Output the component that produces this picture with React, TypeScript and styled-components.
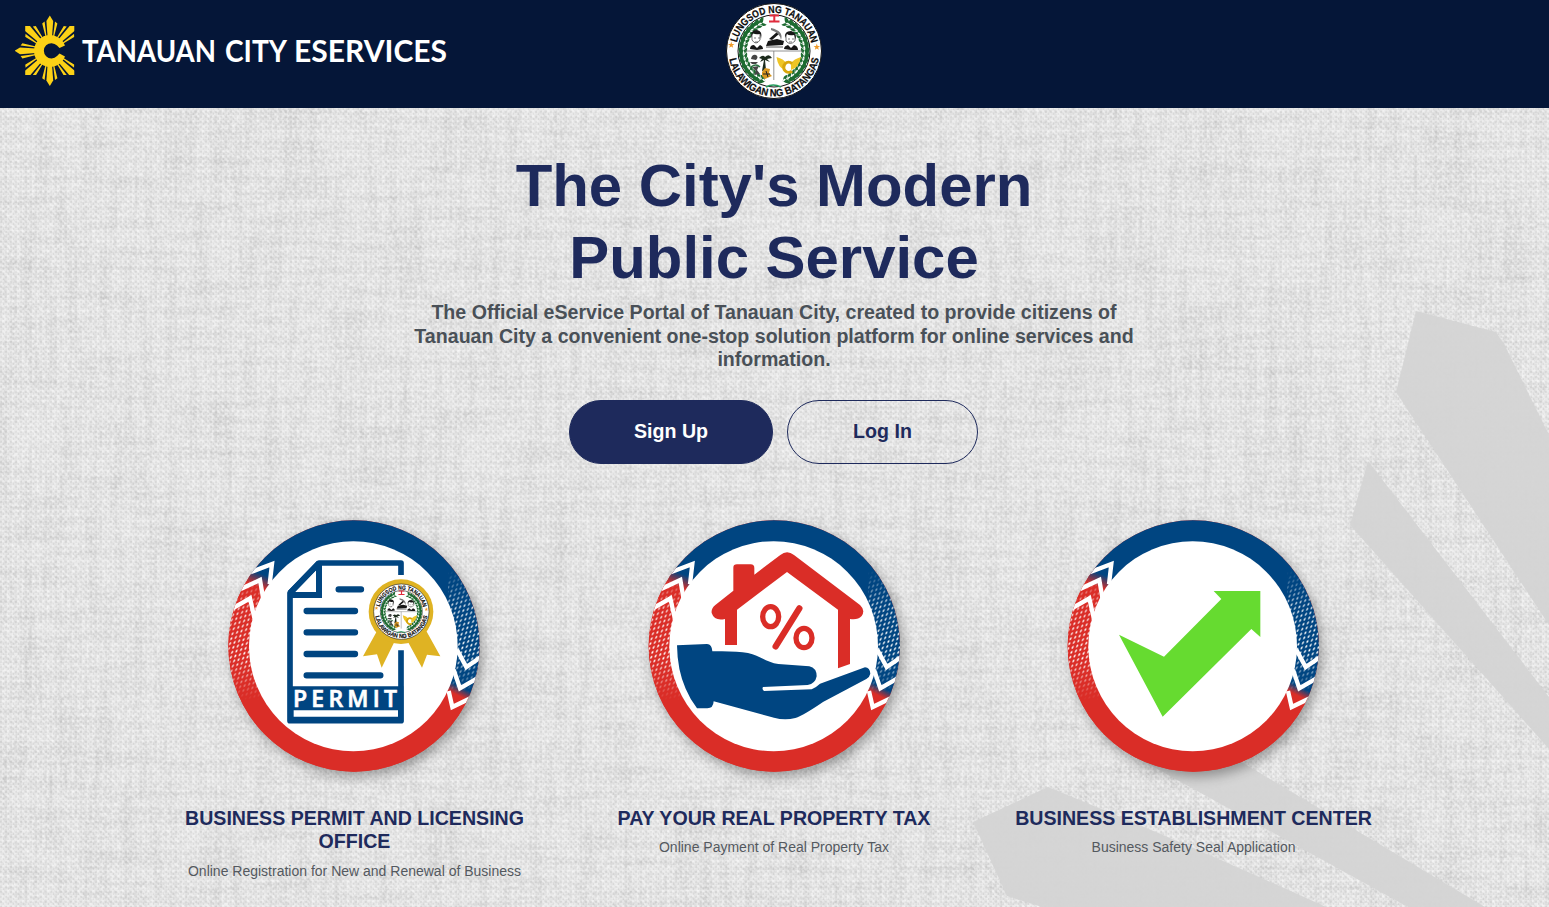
import React, { useId } from "react";
import styled, { createGlobalStyle } from "styled-components";

const NAVY = "#1e2a5c";
const BLUE = "#004581";
const RED = "#da2d27";

const GlobalStyle = createGlobalStyle`
  *, *::before, *::after { box-sizing: border-box; }
  html, body { margin: 0; padding: 0; overflow: hidden; }
  body { font-family: "Liberation Sans", Arial, sans-serif; background: #e3e3e3; }
  h1, h2, h3, p { margin: 0; }
`;

const Page = styled.div`
  display: flex;
  flex-direction: column;
  height: 907px;
  overflow: hidden;
`;

const Header = styled.header`
  display: grid;
  grid-template-columns: 1fr auto 1fr;
  flex: none;
  height: 108px;
  padding: 3px 16px 0 15px;
  background: #051638;
`;

const Brand = styled.a`
  display: flex;
  align-items: center;
  gap: 7px;
  height: 96px;
  color: #fff;
`;

const Wordmark = styled.svg`
  display: block;
  width: 380px;
  height: 50px;
  overflow: visible;
`;

const Main = styled.main`
  position: relative;
  flex: 1;
  display: flex;
  flex-direction: column;
  align-items: center;
  padding: 42px 1px 0 0;
`;

const Backdrop = styled.svg`
  position: absolute;
  inset: 0;
  width: 100%;
  height: 100%;
`;

const Hero = styled.section`
  position: relative;
  display: flex;
  flex-direction: column;
  align-items: center;
  width: 740px;
  text-align: center;
`;

const HeroTitle = styled.h1`
  width: 560px;
  font-size: 59.9px;
  line-height: 72px;
  font-weight: 700;
  color: ${NAVY};
`;

const HeroText = styled.h2`
  margin-top: 7px;
  font-size: 19.6px;
  line-height: 23.52px;
  font-weight: 700;
  color: #495057;
`;

const Actions = styled.div`
  display: flex;
  gap: 14px;
  margin-top: 28px;
  padding-right: 1px;
`;

const Button = styled.button<{ $filled?: boolean }>`
  width: ${(p) => (p.$filled ? 204 : 191)}px;
  height: 64px;
  padding: 0;
  border: 1px solid ${NAVY};
  border-radius: 32px;
  background: ${(p) => (p.$filled ? NAVY : "transparent")};
  color: ${(p) => (p.$filled ? "#fff" : NAVY)};
  font: 700 19.6px "Liberation Sans", Arial, sans-serif;
`;

const Services = styled.section`
  position: relative;
  display: grid;
  grid-template-columns: repeat(3, 419.5px);
  margin-top: 46px;
`;

const Card = styled.article`
  display: flex;
  flex-direction: column;
  align-items: center;
  padding: 0 28px;
  text-align: center;
`;

const BadgeArt = styled.svg`
  display: block;
  width: 270px;
  height: 270px;
  overflow: visible;
`;

const CardTitle = styled.h3`
  margin-top: 27px;
  font-size: 19.6px;
  line-height: 23.52px;
  font-weight: 700;
  color: ${NAVY};
`;

const CardText = styled.p`
  margin-top: 7px;
  font-size: 14px;
  line-height: 21px;
  color: #54595f;
`;

function Sun() {
  const rays = [0, 45, 135, 180, 225, 270, 315];
  return (
    <svg width="60" height="72" viewBox="15 15 60 72">
      <defs>
        <clipPath id="sun-frame">
          <path d="M25.2 26H42V15H58V26H74.3V75H58V87H42V75H25.2V60H15V42H25.2Z" />
        </clipPath>
      </defs>
      <g fill="#fcd116" clipPath="url(#sun-frame)">
        {rays.map((a) => (
          <g key={a} transform={`rotate(${a} 49.8 50.8)`}>
            <path
              d={
                a % 90
                  ? "M47.8 36 46.2 18 48 12H51.6L53.4 18 51.8 36Z"
                  : "M47.6 37 46.4 21 49.8 15.6 53.2 21 52 37Z"
              }
            />
            <path d="M45.6 37 42.2 23.4 44.6 21.6 46.6 37ZM54 37 57.4 23.4 55 21.6 53 37Z" />
          </g>
        ))}
      </g>
      <path
        d="M65 45.5A16 16 0 1 0 65 56.5L59.5 53.5 57 56A7.6 7.6 0 1 1 57 45.6L59.5 48Z"
        fill="#fcd116"
      />
    </svg>
  );
}

const words = [
  { text: "TANAUAN", x: 0, width: 134 },
  { text: "CITY", x: 143, width: 62 },
  { text: "ESERVICES", x: 212, width: 153 },
];

function Seal({ x, y, size }: { x?: number; y?: number; size: number }) {
  const id = useId().replace(/[^a-zA-Z0-9]/g, "");
  const leaves = Array.from({ length: 15 }, (_, i) => 24 + i * 9.6);
  return (
    <svg x={x} y={y} width={size} height={size} viewBox="0 0 96 96" overflow="visible">
      <defs>
        <path id={`${id}t`} d="M10 48A38 38 0 0 1 86 48" />
        <path id={`${id}b`} d="M2.6 48A45.4 45.4 0 0 0 93.4 48" />
      </defs>
      <circle cx="48" cy="48" r="47.5" fill="#fff" stroke="#111" strokeWidth="1" />
      <circle cx="48" cy="48" r="36" fill="#fff" stroke="#111" strokeWidth="1" />
      <g
        fontFamily="Liberation Sans, Arial, sans-serif"
        fontWeight="700"
        fontSize="10.2"
        fill="#0c0c0c"
        stroke="#0c0c0c"
        strokeWidth=".25"
      >
        <text>
          <textPath href={`#${id}t`} startOffset="8.5" textLength="103" lengthAdjust="spacingAndGlyphs">
            LUNGSOD NG TANAUAN
          </textPath>
        </text>
        <text>
          <textPath href={`#${id}b`} startOffset="8" textLength="127" lengthAdjust="spacingAndGlyphs">
            LALAWIGAN NG BATANGAS
          </textPath>
        </text>
      </g>
      <path d="M5.2 38.6 6 41 8.4 41 6.5 42.4 7.2 44.8 5.2 43.4 3.2 44.8 4 42.4 2 41H4.5ZM90.8 40.6 91.6 43 94 43 92.1 44.4 92.8 46.8 90.8 45.4 88.8 46.8 89.5 44.4 87.6 43H90Z" fill="#f09a28" />
      <path
        d="M33 18.5A33 33 0 0 0 33 77.5M63 18.5A33 33 0 0 1 63 77.5"
        fill="none"
        stroke="#1d6b31"
        strokeWidth="3.4"
      />
      <g fill="#1d6b31">
        {leaves.map((a) => (
          <g key={a}>
            <path transform={`rotate(${-a} 48 48)`} d="M45 17Q48 11.5 52 12.6 51 17 47 18.6ZM45 16Q47 22.4 52 21 49 16.5 45 16Z" />
            <path transform={`translate(96 0) scale(-1 1) rotate(${-a} 48 48)`} d="M45 17Q48 11.5 52 12.6 51 17 47 18.6ZM45 16Q47 22.4 52 21 49 16.5 45 16Z" />
          </g>
        ))}
      </g>
      <path d="M40 84Q47 80 55 84" fill="none" stroke="#249b5c" strokeWidth="1.6" />
      <path d="M43.5 12.6H53M48.3 12V18M43 18.6H53.5" stroke="#e02b3c" strokeWidth="2" />
      <path d="M19.5 48H76.5M47.8 48V77" stroke="#777" strokeWidth=".8" />
      <g fill="#171717">
        <path d="M25 35Q24 27 31 27 37 28 35 36L34 31Q29 32 27 30ZM24 46Q24 42 28 42L31 45 34 42Q37 43 37 46L31 47Z" />
        <path d="M59 35Q58 28 65 28 71 29 70 37L68 32Q63 33 61 31ZM58 46Q58 43 62 42L65 45 68 42Q72 43 72 47L65 47Z" />
        <path d="M40 43 42 38 51 36 58 38 57 42ZM43 36 51 29 53 31 46 37Z" />
        <path d="M45 25Q58 28 55 37 54 30 45 27Z" fill="#777" />
      </g>
      <path d="M26 31V37Q30 43 34 37V31M60 32V38Q64 43 69 38V32M28 35H30M32 35H34M62 36H64M66 36H68M29 39H32M63 39H66" fill="none" stroke="#555" strokeWidth=".8" />
      <path d="M40 44H57" stroke="#999" strokeWidth="1.6" />
      <path d="M25 56Q26 51 30 52 33 54 30 57ZM24 59H32L30 61H26ZM26 64 33 63 31 67 34 71 28 72 30 68Z" fill="#444" />
      <path d="M33 55Q37 51 39 54 43 50 46 55L41 56 44 59 39 57 40 67 36 68 38 57 34 59 36 56Z" fill="#1b2a1c" />
      <path d="M25 64Q30 60 34 64" fill="none" stroke="#2b7040" strokeWidth="1.4" />
      <path d="M36 69 39 65 44 66 43 70 46 73 39 76 36 73Z" fill="#d99722" />
      <path d="M37 71H44M40 68 42 74" stroke="#222" strokeWidth="1" />
      <path d="M50.5 54Q58 56 60 60L59 67Q52 65 50.5 54ZM75 54Q68 56 65 60L65 67Q73 65 75 54Z" fill="#efc526" />
      <path d="M66 60.5A5 5 0 1 0 66 68" fill="none" stroke="#d8a60c" strokeWidth="3" />
    </svg>
  );
}

function Badge({ children, shift = 0 }: { children: React.ReactNode; shift?: number }) {
  const id = useId().replace(/[^a-zA-Z0-9]/g, "");
  return (
    <BadgeArt viewBox="0 0 810 810">
      <defs>
        <clipPath id={`${id}c`}>
          <circle cx="403" cy="407" r="377" />
        </clipPath>
        <linearGradient id={`${id}l`} gradientUnits="userSpaceOnUse" x1="120" y1="188" x2="105" y2="225">
          <stop offset="0" stopColor={BLUE} />
          <stop offset="1" stopColor={RED} />
        </linearGradient>
        <linearGradient id={`${id}r`} gradientUnits="userSpaceOnUse" x1="728" y1="532" x2="716" y2="556">
          <stop offset="0" stopColor={BLUE} />
          <stop offset="1" stopColor={RED} />
        </linearGradient>
        <linearGradient id={`${id}f`} x1="0" y1="0" x2="0" y2="1">
          <stop offset="0" stopColor="#fff" stopOpacity="0" />
          <stop offset=".28" stopColor="#fff" stopOpacity=".8" />
          <stop offset=".65" stopColor="#fff" />
          <stop offset="1" stopColor="#fff" stopOpacity="0" />
        </linearGradient>
        <mask id={`${id}m`}>
          <rect x="20" y="200" width="100" height="370" fill={`url(#${id}f)`} />
          <rect x="685" y="180" width="100" height="370" fill={`url(#${id}f)`} />
        </mask>
        <pattern id={`${id}p`} width="12.5" height="15" patternUnits="userSpaceOnUse" patternTransform="skewX(-14) skewY(-18)">
          <ellipse cx="6" cy="7.5" rx="2.7" ry="4.6" fill="#fff" />
        </pattern>
      </defs>
      <g transform={`translate(${shift} 1)`}>
        <circle cx="403" cy="407" r="377" fill={RED} style={{ filter: "drop-shadow(10px 16px 18px rgba(0,0,0,.32))" }} />
        <g clipPath={`url(#${id}c)`}>
          <rect x="20" y="20" width="380" height="780" fill={`url(#${id}l)`} />
          <rect x="399" y="20" width="390" height="780" fill={`url(#${id}r)`} />
          <rect x="20" y="20" width="770" height="780" fill={`url(#${id}p)`} mask={`url(#${id}m)`} />
          <ellipse cx="401" cy="407.5" rx="313" ry="315" fill="#fff" />
          <g fill="none" stroke="#fff" strokeWidth="13">
            <path d="M92 186 157 161 150 222M55 240 121 209 130 262M28 300 91 264 104 322" />
            <path d="M712 418 740 470 790 436M702 478 721 534 780 500M687 542 698 590 760 560" />
          </g>
        </g>
        {children}
      </g>
    </BadgeArt>
  );
}

function PermitArt() {
  return (
    <>
      <path d="M544 194V158H298L211 248V631H544V420" fill="none" stroke={BLUE} strokeWidth="17" strokeLinejoin="round" />
      <path d="M298 158V254H211M211 248 298 158" fill="none" stroke={BLUE} strokeWidth="18" />
      <path d="M357 237H424M261 302H406M261 366H406M261 431H406M261 495H482" stroke={BLUE} strokeWidth="19" strokeLinecap="round" />
      <path d="M205 528H551V636H205Z" fill={BLUE} />
      <path d="M222 600H535V619H222Z" fill="#fff" />
      <text x="220" y="590" textLength="312" lengthAdjust="spacing" fontFamily="Open Sans, Noto Sans, sans-serif" fontWeight="600" fontSize="69" fill="#fff" stroke="#fff" strokeWidth="2">
        PERMIT
      </text>
      <path d="M472 362 430 438 472 432 486 472 524 395H565L607 472 622 433 662 438 620 362Z" fill="#dfb323" />
      <circle cx="544" cy="304" r="97" fill="#dfb323" />
      <Seal x={461} y={220} size={168} />
    </>
  );
}

function PropertyArt() {
  return (
    <>
      <path d="M255 404V326Q223 333 215 308 213 294 226 284L280 241V172Q280 162 291 162H332Q343 162 343 173V193L421 134Q441 118 462 134L660 284Q677 300 665 317 653 330 630 326V461L594 474V298L441 185 291 298V404Z" fill={RED} />
      <g fill="none" stroke={RED}>
        <ellipse cx="392" cy="319" rx="24" ry="30" strokeWidth="16" />
        <ellipse cx="492" cy="383" rx="24" ry="29" strokeWidth="16" />
        <path d="M478 294 407 408" strokeWidth="19" strokeLinecap="round" />
      </g>
      <path d="M111 405 201 401Q216 402 217 423 285 421 324 428C360 436 382 458 415 461L508 468Q530 473 530 498 526 520 503 524L369 530Q365 537 372 542L515 537Q526 533 540 520L675 471Q690 472 691 490 689 500 679 506L549 575Q491 615 466 623 434 631 402 622L221 573Q220 594 202 594H171Q151 568 137 535 112 480 111 405Z" fill={BLUE} />
    </>
  );
}

function CheckArt() {
  return <path d="M180 373 315 439 487 266 464 242H604V380L577 356 311 619Z" fill="#66db30" />;
}

function Linen() {
  return (
    <Backdrop viewBox="0 108 1549 799" preserveAspectRatio="none">
      <defs>
        <filter id="weft" x="0" y="0" width="100%" height="100%" colorInterpolationFilters="sRGB">
          <feTurbulence type="fractalNoise" baseFrequency=".012 .12" numOctaves="3" seed="7" />
          <feColorMatrix values="0 0 0 0 0  0 0 0 0 0  0 0 0 0 0  .75 0 0 0 -.3" />
        </filter>
        <filter id="warp" x="0" y="0" width="100%" height="100%" colorInterpolationFilters="sRGB">
          <feTurbulence type="fractalNoise" baseFrequency=".09 .01" numOctaves="3" seed="21" />
          <feColorMatrix values="0 0 0 0 0  0 0 0 0 0  0 0 0 0 0  .75 0 0 0 -.3" />
        </filter>
        <filter id="grain" x="0" y="0" width="100%" height="100%" colorInterpolationFilters="sRGB">
          <feTurbulence type="fractalNoise" baseFrequency=".28 .3" numOctaves="2" seed="3" />
          <feColorMatrix values="0 0 0 0 1  0 0 0 0 1  0 0 0 0 1  1.6 0 0 0 -.5" />
        </filter>
        <pattern id="twill" width="5" height="5" patternUnits="userSpaceOnUse">
          <path d="M0 1H2V3H0ZM3 3H4V5H3Z" fill="#000" fillOpacity=".045" />
          <path d="M2 0H4V2H2Z" fill="#fff" fillOpacity=".28" />
        </pattern>
      </defs>
      <rect y="108" width="1549" height="799" fill="#e2e2e2" />
      <rect y="108" width="1549" height="799" filter="url(#weft)" opacity=".16" />
      <rect y="108" width="1549" height="799" filter="url(#warp)" opacity=".16" />
      <rect y="108" width="1549" height="799" filter="url(#grain)" opacity=".65" />
      <rect y="108" width="1549" height="799" fill="url(#twill)" />
      <g fill="#d4d4d4" fillOpacity=".95">
        <path d="M1416 311 1496 332 1504 344 1549 435V625L1396 392Z" />
        <path d="M1368 461 1549 697V749L1350 525Z" />
        <path d="M1130 754 1200 738 1248 766 1485 907H1408Z" />
        <path d="M1048 787 973 822 1007 896 1042 907H1326Q1190 845 1048 787Z" />
      </g>
    </Backdrop>
  );
}

const services = [
  { title: "BUSINESS PERMIT AND LICENSING OFFICE", text: "Online Registration for New and Renewal of Business", art: <PermitArt />, shift: -1 },
  { title: "PAY YOUR REAL PROPERTY TAX", text: "Online Payment of Real Property Tax", art: <PropertyArt />, shift: 3 },
  { title: "BUSINESS ESTABLISHMENT CENTER", text: "Business Safety Seal Application", art: <CheckArt />, shift: 0 },
];

export default function App() {
  return (
    <>
      <GlobalStyle />
      <Page>
        <Header>
          <Brand>
            <Sun />
            <Wordmark viewBox="0 0 380 50">
              {words.map((w) => (
                <text
                  key={w.text}
                  x={w.x}
                  y="36"
                  textLength={w.width}
                  lengthAdjust="spacingAndGlyphs"
                  fontFamily="Lato, sans-serif"
                  fontWeight="700"
                  fontSize="30.5"
                  fill="#fff"
                >
                  {w.text}
                </text>
              ))}
            </Wordmark>
          </Brand>
          <Seal size={96} />
        </Header>
        <Main>
          <Linen />
          <Hero>
            <HeroTitle>The City's Modern Public Service</HeroTitle>
            <HeroText>
              The Official eService Portal of Tanauan City, created to provide citizens of Tanauan City a convenient
              one-stop solution platform for online services and information.
            </HeroText>
            <Actions>
              <Button $filled>Sign Up</Button>
              <Button>Log In</Button>
            </Actions>
          </Hero>
          <Services>
            {services.map((s) => (
              <Card key={s.title}>
                <Badge shift={s.shift}>{s.art}</Badge>
                <CardTitle>{s.title}</CardTitle>
                <CardText>{s.text}</CardText>
              </Card>
            ))}
          </Services>
        </Main>
      </Page>
    </>
  );
}
